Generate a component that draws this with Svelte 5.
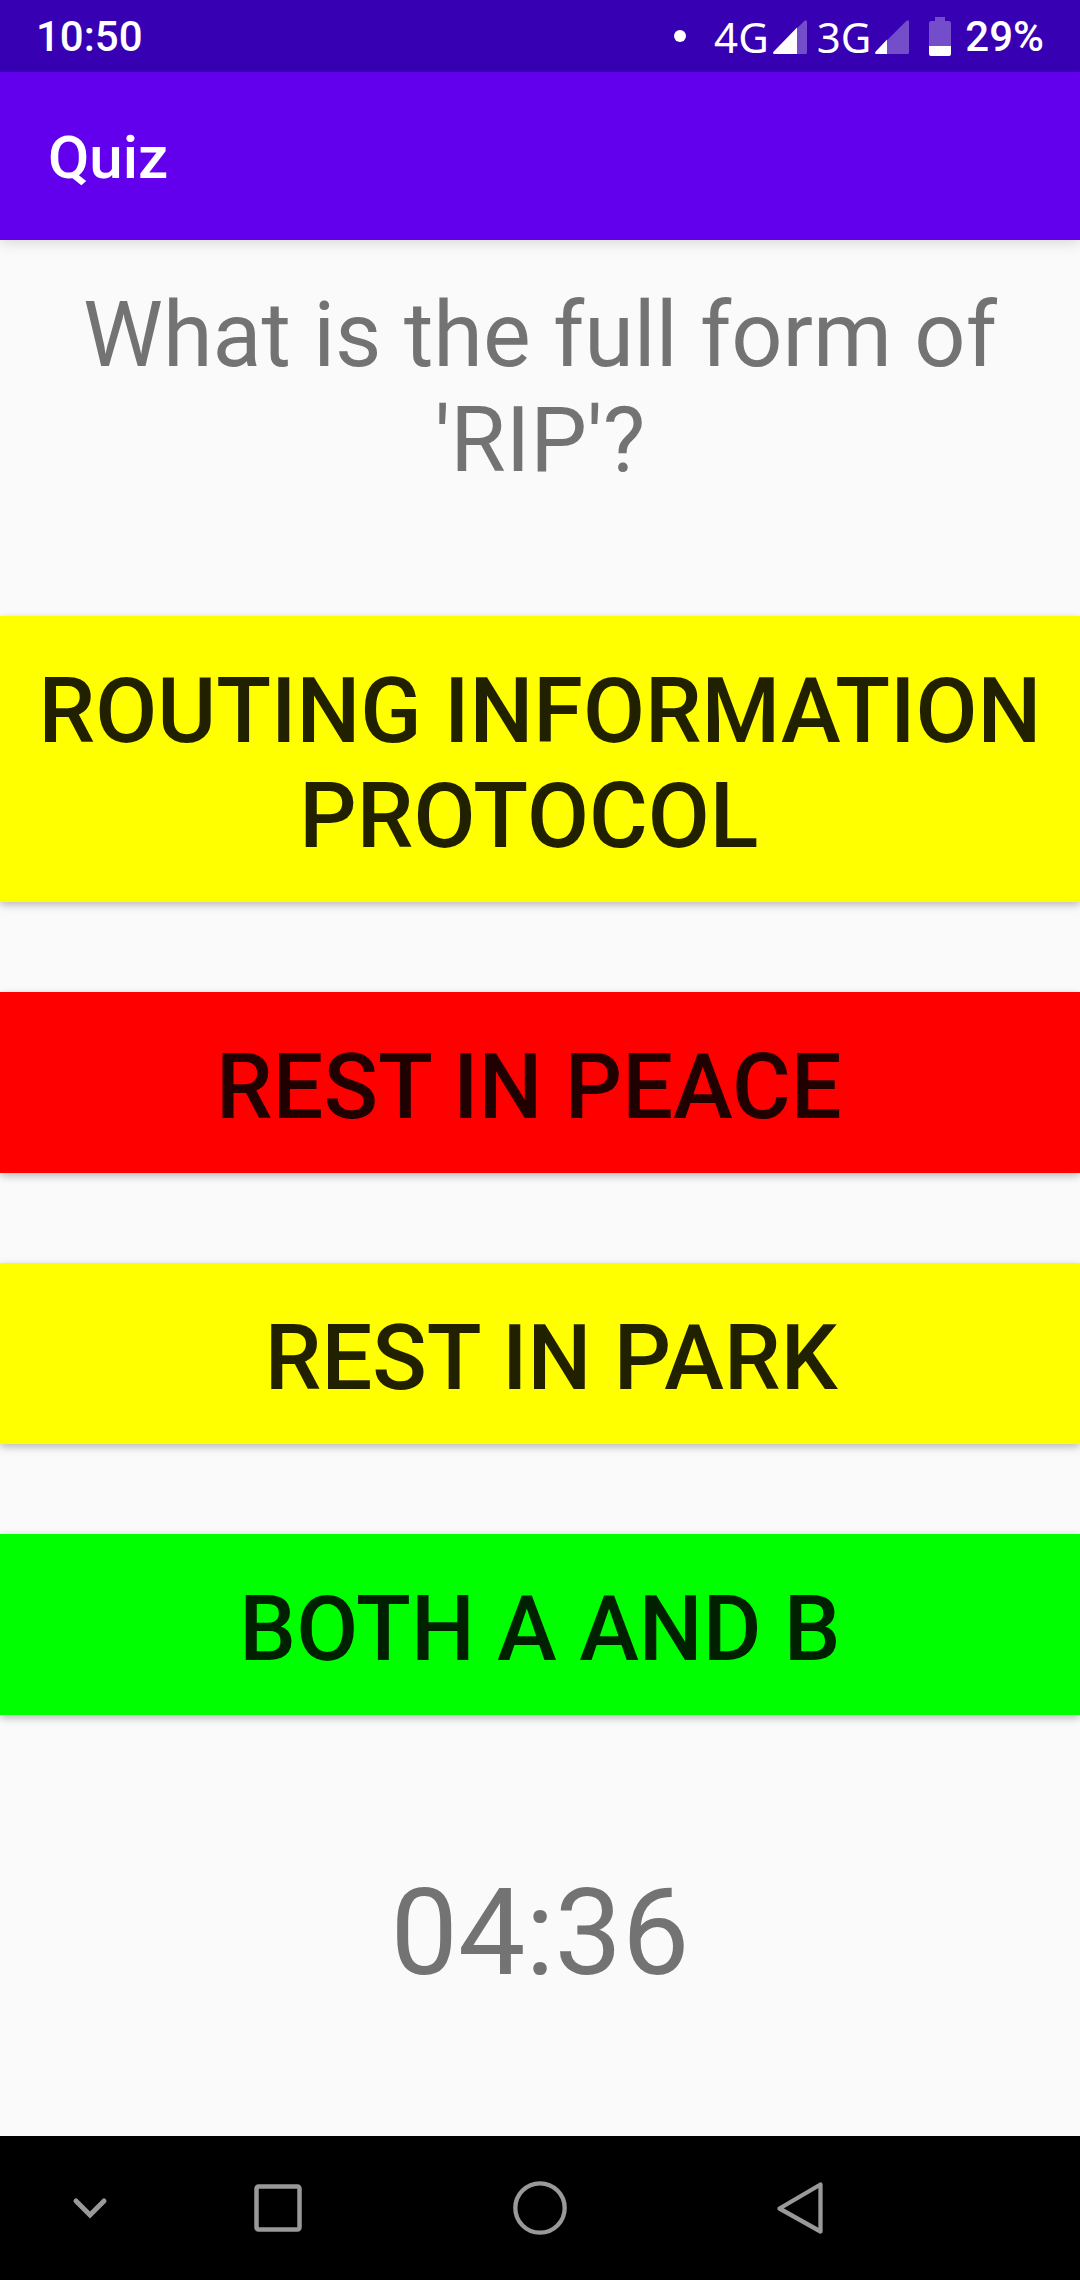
<script>
  const question = "What is the full form of 'RIP'?";
  const answers = [
    { text: 'ROUTING INFORMATION PROTOCOL\u00a0', tone: 'yellow' },
    { text: 'REST IN PEACE\u00a0', tone: 'red' },
    { text: '\u00a0REST IN PARK', tone: 'yellow' },
    { text: 'BOTH A AND B', tone: 'green' }
  ];
</script>

<div class="screen">
  <div class="status">
    <span class="clock">10:50</span>
    <div class="indicators">
      <span class="dot"></span>
      <span class="network">4G</span>
      <svg class="signal" width="34" height="34" viewBox="0 0 34 34" aria-hidden="true">
        <path d="M1.5 34Q-.8 33.500.8 31.500L31.500.8Q34-1 34 2V32.500Q34 34 32.500 34Z" fill="#fff" fill-opacity=".3" />
        <path d="M24 7.500V34H1.500Q-.8 33.500.8 31.500Z" fill="#fff" />
      </svg>
      <span class="network">3G</span>
      <svg class="signal" width="34" height="34" viewBox="0 0 34 34" aria-hidden="true">
        <path d="M1.500 34Q-.8 33.500.8 31.500L31.500.8Q34-1 34 2V32.500Q34 34 32.500 34Z" fill="#fff" fill-opacity=".3" />
        <path d="M12 19.500V34H1.500Q-.8 33.500.8 31.500Z" fill="#fff" />
      </svg>
      <svg class="battery" width="22" height="39" viewBox="0 0 22 39" aria-hidden="true">
        <path d="M6 0H16V4H20Q22 4 22 6V29H0V6Q0 4 2 4H6Z" fill="#fff" fill-opacity=".3" />
        <path d="M0 29H22V37Q22 39 20 39H2Q0 39 0 37Z" fill="#fff" />
      </svg>
      <span class="percent">29%</span>
    </div>
  </div>

  <header><h1>Quiz</h1></header>

  <main>
    <p class="question">{question}</p>
    <div class="answers">
      {#each answers as answer}
        <button type="button" class="answer {answer.tone}">{answer.text}</button>
      {/each}
    </div>
    <p class="timer">04:36</p>
  </main>

  <nav>
    <button type="button" aria-label="Hide navigation bar">
      <svg width="54" height="54" viewBox="0 0 54 54"><path d="M13 20L27 34L41 20" stroke-width="5" /></svg>
    </button>
    <button type="button" aria-label="Recent apps">
      <svg width="54" height="54" viewBox="0 0 54 54"><rect x="5.500" y="5.500" width="43" height="43" rx="2" stroke-width="4.500" /></svg>
    </button>
    <button type="button" aria-label="Home">
      <svg width="54" height="54" viewBox="0 0 54 54"><circle cx="27" cy="27" r="24.700" stroke-width="4.300" /></svg>
    </button>
    <button type="button" aria-label="Back">
      <svg width="54" height="54" viewBox="0 0 54 54"><path d="M47.500 3.500V50.500L6.500 27.500Z" stroke-width="4.300" stroke-linejoin="round" /></svg>
    </button>
  </nav>
</div>

<style>
  :global(body) {
    background: #fafafa;
  }
  .screen {
    display: flex;
    flex-direction: column;
    min-height: 100vh;
    font-family: Roboto, sans-serif;
    color: #737373;
  }
  .status {
    display: flex;
    align-items: center;
    justify-content: space-between;
    height: 72px;
    padding: 0 36px;
    background: #3700b3;
    color: #fff;
    font-size: 42px;
    font-weight: 500;
    line-height: 60px;
  }
  .clock,
  .network,
  .percent {
    padding-top: 2px;
  }
  .indicators {
    display: flex;
    align-items: center;
  }
  .dot {
    width: 12px;
    height: 12px;
    margin-right: 28px;
    border-radius: 50%;
    background: #fff;
  }
  .network {
    font-family: "Noto Sans", sans-serif;
    font-size: 42px;
    font-weight: 400;
  }
  .signal {
    margin: 2px 10px 0 4px;
  }
  .battery {
    margin: 0 14px 0 10px;
  }
  header {
    display: flex;
    align-items: center;
    height: 168px;
    padding: 4px 48px 0;
    box-sizing: border-box;
    background: #6200ee;
    color: #fff;
    box-shadow: 0 4px 12px rgba(0, 0, 0, 0.12);
  }
  h1 {
    margin: 0;
    font-size: 60px;
    font-weight: 500;
    line-height: 72px;
  }
  main {
    flex: 1;
    padding-top: 43px;
    text-align: center;
  }
  p {
    margin: 0;
  }
  .question {
    padding: 0 48px;
    font-size: 90px;
    line-height: 105px;
  }
  .answers {
    display: flex;
    flex-direction: column;
    gap: 90px;
    margin: 123px 0 148px;
  }
  .answer {
    padding: 43px 24px 33px;
    border: 0;
    font-family: inherit;
    font-size: 90px;
    font-weight: 500;
    line-height: 105px;
    color: rgba(0, 0, 0, 0.87);
    box-shadow: 0 3px 8px rgba(0, 0, 0, 0.26);
  }
  .yellow {
    background: #ff0;
  }
  .red {
    background: #f00;
  }
  .green {
    background: #0f0;
  }
  .timer {
    font-size: 120px;
    line-height: 140px;
  }
  nav {
    display: grid;
    grid-template-columns: 180fr 196fr 328fr 192fr 184fr;
    height: 144px;
    background: #000;
  }
  nav button {
    display: flex;
    align-items: center;
    justify-content: center;
    padding: 0;
    border: 0;
    background: none;
  }
  nav svg {
    fill: none;
    stroke: #999;
    stroke-linecap: round;
  }
</style>
